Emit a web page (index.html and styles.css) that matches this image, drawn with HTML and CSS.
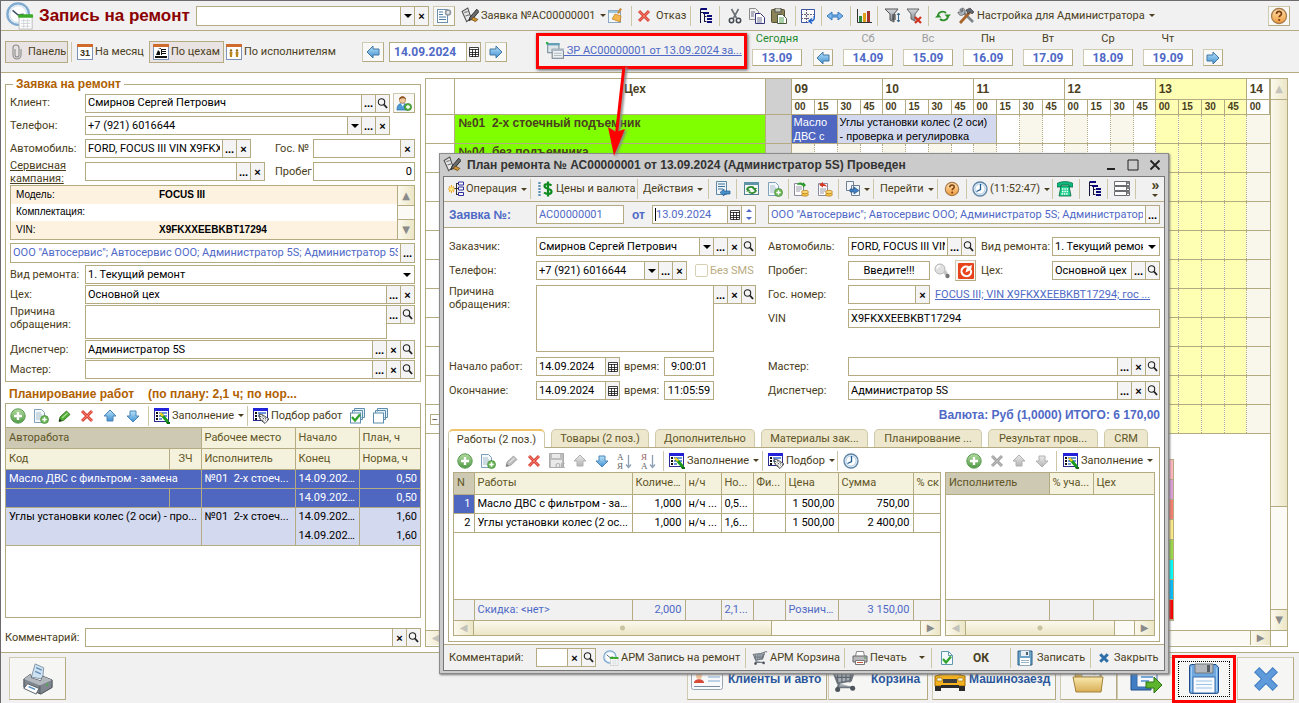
FILE: index.html
```html
<!DOCTYPE html>
<html lang="ru">
<head>
<meta charset="utf-8">
<title>Запись на ремонт</title>
<link rel="stylesheet" href="styles.css">
<script src="app.js" defer></script>
</head>
<body>
<svg class="sprite" aria-hidden="true">
  <defs>
    <linearGradient id="gBlue" x1="0" y1="0" x2="0" y2="1"><stop offset="0" stop-color="#b9e4fa"/><stop offset="1" stop-color="#3f8fd0"/></linearGradient>
    <linearGradient id="gGreen" x1="0" y1="0" x2="0" y2="1"><stop offset="0" stop-color="#b4dba0"/><stop offset="1" stop-color="#4f9a45"/></linearGradient>
    <linearGradient id="gOrange" x1="0" y1="0" x2="0" y2="1"><stop offset="0" stop-color="#ffe2b0"/><stop offset="1" stop-color="#f09a3c"/></linearGradient>
    <linearGradient id="gFolder" x1="0" y1="0" x2="0" y2="1"><stop offset="0" stop-color="#f8e9ae"/><stop offset="1" stop-color="#d9ae55"/></linearGradient>
    <linearGradient id="gGrey" x1="0" y1="0" x2="0" y2="1"><stop offset="0" stop-color="#d5d9de"/><stop offset="1" stop-color="#7f868f"/></linearGradient>
  </defs>
  <symbol id="clockcal" viewBox="0 0 30 30"><circle cx="13" cy="13" r="11.5" fill="#eef6fc" stroke="#7fa9cf" stroke-width="2.5"/><circle cx="13" cy="13" r="9" fill="#fff" stroke="#c9dcec"/><path d="M7 9l6 5 6-1" stroke="#3a4f66" stroke-width="1.6" fill="none"/><rect x="14" y="15" width="14" height="14" fill="#fff" stroke="#b9b9b9"/><rect x="13" y="13" width="16" height="4" rx="1" fill="#3cab2a"/><path d="M16 20h10M16 23h10M16 26h10M19 18v10M23 18v10" stroke="#d0d4d8"/></symbol>
  <symbol id="clip" viewBox="0 0 16 16"><path d="M6 5v6a2 2 0 0 0 4 0V4a3 3 0 0 0-6 0v7a4 4 0 0 0 8 0V5" fill="none" stroke="#8a8a8a" stroke-width="1.1"/></symbol>
  <symbol id="cal31" viewBox="0 0 16 16"><rect x=".5" y=".5" width="15" height="15" fill="#fff" stroke="#7c92b8"/><path d="M0 0h16v3H0z" fill="#cf6b2c"/><text x="8" y="12" font-size="9" font-weight="bold" text-anchor="middle" font-family="Liberation Sans, sans-serif" fill="#3b3216">31</text></symbol>
  <symbol id="calshop" viewBox="0 0 16 16"><rect x=".5" y=".5" width="15" height="15" fill="#fff" stroke="#7c92b8"/><path d="M0 0h16v3H0z" fill="#cf6b2c"/><path d="M2 12h12v2H2zM3 11l2-5 2 2v3zM8 5h5v1H9v1h4v1H9v1h4v1H9v1H8zM5 5l3-1v1z" fill="#111"/></symbol>
  <symbol id="calmen" viewBox="0 0 16 16"><rect x=".5" y=".5" width="15" height="15" fill="#fff" stroke="#7c92b8"/><path d="M0 0h16v3H0z" fill="#cf6b2c"/><circle cx="5" cy="6.500" r="1.200" fill="#8a6410"/><circle cx="11" cy="6.500" r="1.200" fill="#8a6410"/><path d="M3.500 8h3l-.5 5H4zM9.500 8h3l-.5 5h-2z" fill="#b8861b"/></symbol>
  <symbol id="arrl" viewBox="0 0 16 16"><path d="M2 8l6-6v3h6v6H8v3z" fill="url(#gBlue)" stroke="#4378a5"/></symbol>
  <symbol id="arrr" viewBox="0 0 16 16"><path d="M14 8L8 2v3H2v6h6v3z" fill="url(#gBlue)" stroke="#4378a5"/></symbol>
  <symbol id="up" viewBox="0 0 16 16"><path d="M8 2l6 6h-3v5H5V8H2z" fill="url(#gBlue)" stroke="#4b86b8"/></symbol>
  <symbol id="down" viewBox="0 0 16 16"><path d="M8 14L2 8h3V3h6v5h3z" fill="url(#gBlue)" stroke="#4b86b8"/></symbol>
  <symbol id="cal" viewBox="0 0 10 10"><path d="M.5 .500h9v9h-9zM.5 2.500h9M.5 5.500h9M.5 7.500h9M3.500 2v8M6.500 2v8" fill="#fff" stroke="#111" stroke-width=".8"/></symbol>
  <symbol id="listgear" viewBox="0 0 16 16"><rect x="1.500" y="1.500" width="10" height="13" fill="#fff" stroke="#6b8fae"/><path d="M3 4h4M3 6.500h4M3 9h7M3 11.500h7" stroke="#4a7ba5"/><circle cx="12" cy="4.500" r="2.500" fill="#dfe3e6" stroke="#8d979f" stroke-width="1.500"/></symbol>
  <symbol id="sign" viewBox="0 0 16 16"><path d="M1 4l5-3 3 9-4 3z" fill="#e8e8e8" stroke="#555"/><path d="M3 5l3-1M4 8l3-1" stroke="#777"/><path d="M14 2l-6 7-1 3 3-1 6-7z" fill="#6c6c6c" stroke="#222" stroke-width=".8"/><path d="M11 9l4 2-2 2-4-2z" fill="#d2932f" stroke="#5c3b08" stroke-width=".6"/></symbol>
  <symbol id="brush" viewBox="0 0 16 16"><rect x="1.500" y="2.500" width="12" height="12" fill="#f3f8fc" stroke="#8ba7c0"/><path d="M2 3h11v2H2z" fill="#9fc4de"/><path d="M13 0l-3 5 2 1 3-5z" fill="#c98b3d"/><path d="M8 6l6 2-1 6-8-3z" fill="#f4b64c" stroke="#c27d1b" stroke-width=".7"/></symbol>
  <symbol id="redx" viewBox="0 0 16 16"><path d="M3 3l10 10M13 3L3 13" stroke="#d9483b" stroke-width="3"/><path d="M3 3l10 10M13 3L3 13" stroke="#f3786a" stroke-width="1"/></symbol>
  <symbol id="bluex" viewBox="0 0 16 16"><path d="M3 3l10 10M13 3L3 13" stroke="#2f6ea8" stroke-width="4"/></symbol>
  <symbol id="bigx" viewBox="0 0 30 30"><path d="M5 5l20 20M25 5L5 25" stroke="#3c7abf" stroke-width="8"/><path d="M5.500 5.500l19 19M24.500 5.500l-19 19" stroke="#5f9adb" stroke-width="6"/></symbol>
  <symbol id="tree" viewBox="0 0 16 16"><path d="M2 1h6M2.500 1v13.500M2 4.500h4M6.500 4v10M6.500 8.500h2M6.500 13.500h2M2 14.500h1" stroke="#14143c" fill="none"/><path d="M3 0h6v2H3zM5 4h6v2H5zM9 7h5v2H9zM9 10h5v2H9zM9 13h5v2H9z" fill="#0a0a78"/></symbol>
  <symbol id="cut" viewBox="0 0 16 16"><path d="M4.500 1l5 9M11.500 1l-5 9" stroke="#6a6f75" stroke-width="1.600"/><circle cx="4.500" cy="12.500" r="2.200" fill="none" stroke="#444a52" stroke-width="1.500"/><circle cx="11.500" cy="12.500" r="2.200" fill="none" stroke="#444a52" stroke-width="1.500"/></symbol>
  <symbol id="copy" viewBox="0 0 16 16"><path d="M.5.5h6l3 3v8h-9z" fill="#efefef" stroke="#8a8a8a"/><path d="M6.500 5.500h5l4 4v6h-9z" fill="#fff" stroke="#35357c"/><path d="M8 10h5M8 12h5M8 14h5M2 4h4M2 6h3M2 8h3" stroke="#707090"/></symbol>
  <symbol id="paste" viewBox="0 0 16 16"><rect x=".5" y="1.500" width="13" height="13" rx="1" fill="#8c8458" stroke="#544f2e"/><rect x="4" y="0" width="6" height="4" fill="#c9c9b5" stroke="#555"/><path d="M6.500 6.500h5l4 4v5h-9z" fill="#fff" stroke="#4a5a3a"/><path d="M8 10h5M8 12h5M8 14h5" stroke="#55a055"/></symbol>
  <symbol id="tabarr" viewBox="0 0 16 16"><path d="M1.500 1.500h13v8M1.500 1.500v13h7" fill="#fff" stroke="#3a54a8"/><path d="M1 6.500h13M6.500 1v13M1 10.500h9" stroke="#667" stroke-dasharray="2 1"/><path d="M14 8c1 4-1 5-4 5M12 10.500L9 13l3 2.500" fill="none" stroke="#1b5fc9" stroke-width="1.400"/></symbol>
  <symbol id="dbl" viewBox="0 0 16 16"><path d="M0 8l5-4v3h6V4l5 4-5 4V9H5v3z" fill="#79b5ea" stroke="#2b6cb5" stroke-width=".9"/></symbol>
  <symbol id="chart" viewBox="0 0 16 16"><path d="M1.500 1v13.500H16" fill="none" stroke="#333"/><path d="M3 8h3v6H3z" fill="#2b8a3c"/><path d="M7 5h3v9H7z" fill="#e0a01a"/><path d="M11 3h3v11h-3z" fill="#a3322a"/></symbol>
  <symbol id="filt" viewBox="0 0 16 16"><path d="M1 1h13l-4 5v8l-4-2V6z" fill="url(#gGrey)" stroke="#555"/><path d="M8 7h4M8 9h4M8 11h4" stroke="#333"/><path d="M14.500 5v9M13 12l1.500 2 1.500-2M13 7l1.500-2L16 7" stroke="#34688f" fill="none"/></symbol>
  <symbol id="filtx" viewBox="0 0 16 16"><path d="M1 1h12L9 6v7l-4-2V6z" fill="url(#gGrey)" stroke="#666"/><path d="M9 9l6 6M15 9l-6 6" stroke="#d0301f" stroke-width="2.200"/></symbol>
  <symbol id="refresh" viewBox="0 0 16 16"><path d="M3 8c0-5 6-5 8-3M13 8c0 5-6 5-8 3" fill="none" stroke="#2f8f2a" stroke-width="1.800"/><path d="M9.500 6.500H16L12.700 10zM0 9.500h6.500L3.300 6z" fill="#2f8f2a"/></symbol>
  <symbol id="tools" viewBox="0 0 18 18"><path d="M3 2l4 4 9 9" stroke="#7d848c" stroke-width="2.600"/><path d="M1 5c0 3 3 4 5 3L8 6C9 3 7 1 5 1l1 3-2 1z" fill="#aeb5bd" stroke="#555" stroke-width=".7"/><path d="M13 5L3 16" stroke="#a9642c" stroke-width="2.800"/><path d="M9 3l4-2 4 4-2 2-2-2-2 2z" fill="#5f666e" stroke="#333" stroke-width=".6"/></symbol>
  <symbol id="help" viewBox="0 0 18 18"><circle cx="9" cy="9" r="7.500" fill="url(#gOrange)" stroke="#a87d4d" stroke-width="1.300"/><path d="M6.500 7c0-3.500 5-3.300 5-.3 0 1.800-2.300 1.800-2.300 3.600" fill="none" stroke="#7c3f12" stroke-width="1.700"/><circle cx="9.200" cy="13" r="1.100" fill="#7c3f12"/></symbol>
  <symbol id="wins" viewBox="0 0 16 16"><rect x="1.500" y="1.500" width="10" height="8" fill="#dfe6ea" stroke="#7d929e"/><path d="M1 1h11v2H1z" fill="#5fa0b8"/><rect x="5.500" y="6.500" width="10" height="8" fill="#eef1f3" stroke="#7d8a94"/><path d="M5 6h11v2H5z" fill="#a9b8c2"/><path d="M7 10h7M7 12h7" stroke="#b5bdc4"/><path d="M0 0h2v2H0z" fill="#2fae45"/></symbol>
  <symbol id="mag" viewBox="0 0 11 11"><circle cx="4.500" cy="4" r="3.200" fill="none" stroke="#222" stroke-width="1.100"/><path d="M7 6.500L10 10" stroke="#222" stroke-width="1.900"/></symbol>
  <symbol id="useradd" viewBox="0 0 16 16"><path d="M1 15c0-6 3-6.500 5.500-6.500S12 9 12 15z" fill="#4d9bd6" stroke="#2d6ca5" stroke-width=".7"/><path d="M5 8.500l1.700 3 1.600-3z" fill="#fff"/><circle cx="6.500" cy="5" r="3.200" fill="#f0c79c" stroke="#a9743c" stroke-width=".6"/><path d="M3 5c0-5 7-5 7 0C9 2.500 5 3 3 5z" fill="#8a5322"/><circle cx="12" cy="12" r="3.600" fill="#57b03f" stroke="#2d7a1d" stroke-width=".6"/><path d="M12 10v4M10 12h4" stroke="#fff" stroke-width="1.300"/></symbol>
  <symbol id="plus" viewBox="0 0 16 16"><circle cx="8" cy="8" r="7.200" fill="url(#gGreen)" stroke="#5b9a52" stroke-width="1"/><path d="M8 4v8M4 8h8" stroke="#fff" stroke-width="2.400"/></symbol>
  <symbol id="docplus" viewBox="0 0 16 16"><path d="M1.500 1.500h7l3 3v10h-10z" fill="#f5f9fc" stroke="#7fa0b8"/><path d="M3 5h5M3 7h6M3 9h5M3 11h4" stroke="#a5bccb"/><circle cx="11.500" cy="11.500" r="4" fill="#6cb758" stroke="#43873a" stroke-width=".7"/><path d="M11.500 9.300v4.400M9.300 11.500h4.400" stroke="#fff" stroke-width="1.500"/></symbol>
  <symbol id="pencil" viewBox="0 0 16 16"><path d="M3 13.500l1-4.500 6.500-6 3.500 3.500-6.500 6z" fill="#4fae33" stroke="#2c6b1c" stroke-width=".8"/><path d="M3 13.500l.7-2.800 2.200 2.200z" fill="#222"/><path d="M6 10l5.500-5" stroke="#a9dd92" stroke-width="1.300"/></symbol>
  <symbol id="fill" viewBox="0 0 16 16"><rect x=".5" y=".5" width="14" height="13" fill="#fff" stroke="#2b2b8f"/><path d="M0 0h15v3H0z" fill="#2222d8"/><path d="M2 5h2M2 8h2M2 11h2" stroke="#111" stroke-width="2"/><path d="M5 5h8M5 8h8M5 11h3" stroke="#3b6fd0" stroke-width="1.500"/><path d="M7 6l7 8" stroke="#1a9a1a" stroke-width="3"/><path d="M6 5l3 3" stroke="#f2d22a" stroke-width="2.400"/><path d="M12 14h4v2h-3z" fill="#0d6e0d"/></symbol>
  <symbol id="pick" viewBox="0 0 16 16"><rect x=".5" y=".5" width="14" height="12" fill="#fff" stroke="#2b2b8f"/><path d="M0 0h15v3H0z" fill="#2222d8"/><path d="M2 5h2M2 8h2M2 11h2" stroke="#111" stroke-width="2"/><path d="M5 5h8M5 8h3" stroke="#3b6fd0" stroke-width="1.500"/><path d="M6 6l4 1 6 4-4 4.500-5-4z" fill="#fff" stroke="#111" stroke-width=".7"/><path d="M7 8l6 4.500M9 7.500l6 4.500M7.500 10.500l4 3.500" stroke="#111" stroke-dasharray="1 1"/></symbol>
  <symbol id="checks" viewBox="0 0 16 16"><path d="M5.500 3.500v-3h10v9h-3M3.500 5.500v-3h10v9h-3" fill="#e6f0f7" stroke="#5d8dae"/><rect x="1.500" y="5" width="10" height="10" fill="#fff" stroke="#5d8dae"/><path d="M3 9l3 3.500 5-6" fill="none" stroke="#2fa32a" stroke-width="2.400"/></symbol>
  <symbol id="squares" viewBox="0 0 16 16"><path d="M5.500 3.500v-3h10v9h-3M3.500 5.500v-3h10v9h-3" fill="#e6f0f7" stroke="#5d8dae"/><rect x="1.500" y="5" width="10" height="10" fill="#fff" stroke="#5d8dae"/></symbol>
  <symbol id="oper" viewBox="0 0 16 16"><path d="M3.500 4v8M0 8h7M1 5.500l5 5M6 5.500l-5 5" stroke="#eba419" stroke-width="1.100"/><circle cx="3.500" cy="8" r="2" fill="#ffe57a"/><path d="M8.500 2v12M8 2.500h2M6.500 7.500H10M8 13.500h2" stroke="#333" fill="none"/><path d="M10.500 1h5v3h-5zM10.500 6h5v3h-5zM10.500 11.500h5v3h-5z" fill="#fff" stroke="#2c2c9c"/></symbol>
  <symbol id="dollar" viewBox="0 0 16 16"><path d="M1 1v14M1 2h3M1 5h3M1 8h3M1 11h3M1 14h3" stroke="#2b6ea0" stroke-dasharray="2 1"/><path d="M13.500 4.500c-2-2-7-2-7 .5 0 3.500 7 2 7 5.500 0 3-5 3-7.500 1M10 .5v15" fill="none" stroke="#0d8a1d" stroke-width="2.200"/></symbol>
  <symbol id="listin" viewBox="0 0 16 16"><path d="M1.500.5h10v13h-10z" fill="#eef5fa" stroke="#5e87a5"/><path d="M3 3h7M3 5.500h7M3 8h5" stroke="#3f6f94"/><path d="M5 11.500l4-3.500v2h6v3H9v2z" fill="#4990cc" stroke="#205a8d" stroke-width=".7"/></symbol>
  <symbol id="cyc" viewBox="0 0 16 16"><rect x=".5" y="1.500" width="14" height="12" fill="#f3f8f3" stroke="#4f7f94"/><path d="M0 1h15v3H0z" fill="#5f93a8"/><path d="M3 9c0-3 5-4 7-2M12 9c0 3-5 4-7 2" fill="none" stroke="#2c8a2c" stroke-width="1.600"/><path d="M8 7h5l-2 3zM2 10.500h5L4.500 8z" fill="#2c8a2c"/></symbol>
  <symbol id="docg" viewBox="0 0 16 16"><path d="M1.500 2.500h9v12h-9z" fill="#fff" stroke="#8a8a9c"/><path d="M3 6h6M3 8h6M3 10h4" stroke="#99a"/><path d="M4 4c1-3 4-3 6-1V1l3 3-3 3V5C8 3.500 6 3.500 4 4z" fill="#2d9a2d"/><ellipse cx="12" cy="13.500" rx="3.500" ry="1.700" fill="#f6c044" stroke="#b07c17" stroke-width=".7"/><ellipse cx="12" cy="11" rx="3.500" ry="1.700" fill="#fbd673" stroke="#b07c17" stroke-width=".7"/></symbol>
  <symbol id="docr" viewBox="0 0 16 16"><path d="M1.500 2.500h9v12h-9z" fill="#fff" stroke="#8a8a9c"/><path d="M3 8h6M3 10h6M3 12h4" stroke="#99a"/><path d="M10 6C9 3 7 3 6 3V1L2 3.700 6 6.500V5c2 0 3 0 4 1z" fill="#d8361f"/><ellipse cx="12" cy="13.500" rx="3.500" ry="1.700" fill="#f6c044" stroke="#b07c17" stroke-width=".7"/><ellipse cx="12" cy="11" rx="3.500" ry="1.700" fill="#fbd673" stroke="#b07c17" stroke-width=".7"/></symbol>
  <symbol id="docgo" viewBox="0 0 16 16"><path d="M.5.5h7v9h-7zM5.500 4.500h8v10h-8z" fill="#f2f6fa" stroke="#6d7f92"/><path d="M4 8l4 0V6l5 3.500L8 13v-2H4z" fill="#3d7fbf" stroke="#1e4f80" stroke-width=".6"/></symbol>
  <symbol id="clock" viewBox="0 0 16 16"><circle cx="8" cy="8" r="7" fill="#dfeefa" stroke="#5f83a5" stroke-width="1.300"/><circle cx="8" cy="8" r="5" fill="#fff" stroke="#9dbcd6" stroke-width=".7"/><path d="M8.500 3v5.500l-4 2" stroke="#1f5d95" stroke-width="1.300" fill="none"/></symbol>
  <symbol id="phone" viewBox="0 0 16 16"><path d="M0 2.500C4 0 12 0 16 2.500V6h-4V4H4v2H0z" fill="#10b981" stroke="#056b3e" stroke-width=".8"/><path d="M4 5h8l2 10H2z" fill="#1fd18f" stroke="#056b3e" stroke-width=".8"/><path d="M5 8h6M5 10.500h6M4.500 13h7" stroke="#fff" stroke-width="1.300" stroke-dasharray="1.500 .8"/></symbol>
  <symbol id="lists" viewBox="0 0 16 16"><path d="M.5.500h15v4H.5zM.5 5.500h15v4H.5zM.5 10.500h15v4H.5z" fill="#fff" stroke="#6a6e73"/><path d="M12.500 0v15" stroke="#6a6e73"/><path d="M13 2h2M13 7h2M13 12h2" stroke="#111"/></symbol>
  <symbol id="floppy" viewBox="0 0 16 16"><path d="M1 1h14v14H1z" fill="#6da3c7" stroke="#2e5f85"/><path d="M4 1h8v5H4z" fill="#e9eef2"/><path d="M9 2h2v3H9z" fill="#47606f"/><path d="M3 8h10v7H3z" fill="#fff"/><path d="M4 10.500h8M4 12.500h8" stroke="#9db5c5"/></symbol>
  <symbol id="bigfloppy" viewBox="0 0 32 32"><path d="M1.500 3.500q0-2 2-2H28l2.500 3v24q0 2-2 2h-25q-2 0-2-2z" fill="#6ea8e0" stroke="#1f4b8a"/><path d="M3.500 4v24M28.500 5v23" stroke="#a5ccf2"/><path d="M7 1h18v9H7z" fill="#b4b8bc" stroke="#70777f"/><path d="M19 2h3v7h-3z" fill="#555c64"/><path d="M5 14h22v16H5z" fill="#f7fbff" stroke="#3c6ea8"/><path d="M8 18h16M8 21.500h16M8 25h16" stroke="#9fc3e6"/></symbol>
  <symbol id="diskok" viewBox="0 0 16 16"><path d="M.5.5h14v14H.5z" fill="#8d959d" stroke="#6d757d"/><path d="M3 1h8v4H3zM2 7h11v7H2z" fill="#d8dce0"/><text x="16" y="15" font-size="7" font-weight="bold" text-anchor="end" font-family="Liberation Sans, sans-serif" fill="#6d757d">ОК</text></symbol>
  <symbol id="az" viewBox="0 0 16 16"><text x="0" y="7" font-size="9" font-family="Liberation Serif, serif" fill="#666">А</text><text x="0" y="15.500" font-size="9" font-family="Liberation Serif, serif" fill="#666">Я</text><path d="M11.500 2v12M9 11.500l2.500 3 2.500-3" fill="none" stroke="#8da0b3" stroke-width="1.300"/></symbol>
  <symbol id="za" viewBox="0 0 16 16"><text x="0" y="7" font-size="9" font-family="Liberation Serif, serif" fill="#966">Я</text><text x="0" y="15.500" font-size="9" font-family="Liberation Serif, serif" fill="#666">А</text><path d="M11.500 2v12M9 11.500l2.500 3 2.500-3" fill="none" stroke="#8da0b3" stroke-width="1.300"/></symbol>
  <symbol id="bulb" viewBox="0 0 16 16"><circle cx="6" cy="6" r="5" fill="#e0e0e0" stroke="#b5b5b5"/><path d="M9 10l3-3 2 4-2 2z" fill="#c5c5c5"/><circle cx="13.500" cy="13" r="2.200" fill="#777"/><path d="M3 6c0-2 1-3 3-3" fill="none" stroke="#fff" stroke-width="1.300"/></symbol>
  <symbol id="swirl" viewBox="0 0 16 16"><rect width="16" height="16" rx="1" fill="#e8441c"/><path d="M10.500 4C6 2.500 3 5.500 3.500 9c1 4.500 7 5.500 9 2 .8-1.500.8-3 .300-4" fill="none" stroke="#fff" stroke-width="2"/><path d="M7.500 9.500L9 4l5-2-1 5z" fill="#fff"/></symbol>
  <symbol id="cart" viewBox="0 0 18 16"><path d="M1 4l9-1 5-2h2M14 2l-3 8M1.500 4l2.500 6.500L12 9l2-6M5 10.500L4 13h9" fill="#a9b0b8" stroke="#6d747c" stroke-width="1.100"/><path d="M4 4v6M6.500 4v6M9 3.500V9.500M11.500 3v6M2.500 7H12" stroke="#5d656e" stroke-width=".7"/><circle cx="4" cy="14.300" r="1.500" fill="#4d545c"/><circle cx="13" cy="13.500" r="1.500" fill="#4d545c"/></symbol>
  <symbol id="print" viewBox="0 0 16 16"><path d="M4.500 1.500h7l1 5h-9z" fill="#fff" stroke="#888"/><path d="M1 6h14v6H1z" fill="#b9b9bb" stroke="#66666a"/><path d="M3.500 10.500h9v4h-9z" fill="#fff" stroke="#777"/><path d="M5 12.500h6" stroke="#c2573a"/><circle cx="13" cy="8" r=".8" fill="#2f9a2f"/></symbol>
  <symbol id="bigprint" viewBox="0 0 34 34"><path d="M10 15L14 1l9 4-1 12z" fill="#cfe2f2" stroke="#7e94a8"/><path d="M15 5l6 2.500M14 9l6 2.500" stroke="#5e8fb8" stroke-width="1.500"/><path d="M2 17l7-5 1 4 10 3 2-5 10 4v8l-12 7L2 26z" fill="#7f868e" stroke="#3f454c"/><path d="M2 17l17 7 13-6-10-4-2 5-10-3-1-4z" fill="#b2b8be"/><path d="M6 22l12 5-3 6-13-6z" fill="#fff" stroke="#59616a"/><path d="M7 25l7 3" stroke="#4f8fc4" stroke-width="1.500"/><path d="M19 24v9" stroke="#4c5259"/><circle cx="27" cy="23" r="1.200" fill="#45b545"/></symbol>
  <symbol id="doccheck" viewBox="0 0 16 16"><path d="M2.500 1.500h7l4 4v9h-11z" fill="#f4fafc" stroke="#5f98ae"/><path d="M9.500 1.500v4h4" fill="none" stroke="#5f98ae"/><path d="M4 9l3 3.500 5-6" stroke="#2fa32a" stroke-width="2.200" fill="none"/></symbol>
  <symbol id="card" viewBox="0 0 34 28"><rect x="1.500" y="1.500" width="31" height="23" rx="2" fill="#f7f9fb" stroke="#9ba6b3"/><circle cx="9" cy="11" r="3" fill="#efc39a"/><path d="M4 18c0-5 10-5 10 0z" fill="#d84a35"/><path d="M18 8h12M18 12h12M18 16h12" stroke="#a9c4de" stroke-width="1.500"/><path d="M4 21.500h26" stroke="#7b8c9e"/></symbol>
  <symbol id="car" viewBox="0 0 34 26"><path d="M6 9l4-7h14l4 7z" fill="#555d66" stroke="#8b5a06"/><path d="M2 10q15-4 30 0v10H2z" fill="#f5b21e" stroke="#a06b04"/><path d="M10 13h14v4H10z" fill="#3d3d3d"/><path d="M4 12h5v3H4zM25 12h5v3h-5z" fill="#fff8d8" stroke="#8b6a12" stroke-width=".6"/><path d="M2 20h6v5H2zM26 20h6v5h-6zM8 19h18v3H8z" fill="#2a2a2a"/></symbol>
  <symbol id="folder" viewBox="0 0 34 30"><path d="M3 6h10l3 3h13v18H4z" fill="#d4ac57" stroke="#96752e"/><path d="M10 8l8-5 10 4v6H10z" fill="#fff" stroke="#9aa"/><path d="M16 7l8-3-1 7z" fill="#3ea32d"/><path d="M1 13h30l-2 15H4z" fill="url(#gFolder)" stroke="#a5833c"/></symbol>
  <symbol id="export" viewBox="0 0 34 30"><path d="M2 2h20v24H2z" fill="#3f7dc4" stroke="#234f8a"/><path d="M8 4h20v19H8z" fill="#f5f9fd" stroke="#3c6ea8"/><path d="M12 9h12M12 13h12M12 17h8" stroke="#4f8fd0" stroke-width="1.500"/><path d="M17 18h8v-5l8 8-8 8v-5h-8z" fill="#5db52f" stroke="#2f7412"/></symbol>
</svg>

<header>
  <div class="mainbar">
    <svg class="i30"><use href="#clockcal"/></svg>
    <h1>Запись на ремонт</h1>
    <span class="field tall search"><input aria-label="Поиск"><button class="drop" aria-label="Выбрать"></button><button>×</button></span>
    <button class="framed" aria-label="Настройка списка"><svg><use href="#listgear"/></svg></button>
    <button class="tool"><svg class="i18"><use href="#sign"/></svg>Заявка №АС00000001<i class="caret"></i></button>
    <button class="tool" aria-label="Очистить"><svg><use href="#brush"/></svg></button>
    <i class="sep"></i>
    <button class="tool gapped"><svg><use href="#redx"/></svg>Отказ</button>
    <i class="sep"></i>
    <button class="tool" aria-label="Структура"><svg><use href="#tree"/></svg></button>
    <i class="sep"></i>
    <button class="tool" aria-label="Вырезать"><svg><use href="#cut"/></svg></button>
    <button class="tool" aria-label="Копировать"><svg><use href="#copy"/></svg></button>
    <button class="tool" aria-label="Вставить"><svg><use href="#paste"/></svg></button>
    <i class="sep"></i>
    <button class="tool" aria-label="Обновить таблицу"><svg><use href="#tabarr"/></svg></button>
    <i class="sep"></i>
    <button class="tool" aria-label="Ширина"><svg><use href="#dbl"/></svg></button>
    <i class="sep"></i>
    <button class="tool" aria-label="Диаграмма"><svg><use href="#chart"/></svg></button>
    <i class="sep"></i>
    <button class="tool" aria-label="Отбор"><svg><use href="#filt"/></svg></button>
    <button class="tool" aria-label="Снять отбор"><svg><use href="#filtx"/></svg></button>
    <i class="sep"></i>
    <button class="tool" aria-label="Обновить"><svg><use href="#refresh"/></svg></button>
    <button class="tool"><svg class="i18"><use href="#tools"/></svg>Настройка для Администратора<i class="caret"></i></button>
    <button class="framed" aria-label="Справка"><svg class="i18"><use href="#help"/></svg></button>
  </div>

  <div class="datebar">
    <button class="mode on"><svg><use href="#clip"/></svg>Панель</button>
    <i class="sep"></i>
    <button class="mode"><svg><use href="#cal31"/></svg>На месяц</button>
    <button class="mode on"><svg><use href="#calshop"/></svg>По цехам</button>
    <button class="mode"><svg><use href="#calmen"/></svg>По исполнителям</button>
    <button class="framed" aria-label="Предыдущий день"><svg><use href="#arrl"/></svg></button>
    <span class="field tall datefield"><input aria-label="Дата" value="14.09.2024"><button aria-label="Календарь"><svg class="i10"><use href="#cal"/></svg></button></span>
    <button class="framed" aria-label="Следующий день"><svg><use href="#arrr"/></svg></button>
    <div class="callout"><a href="#plan"><svg class="i18"><use href="#wins"/></svg><span>&nbsp;ЗР АС00000001 от 13.09.2024 за...</span></a></div>
    <div class="day today"><span>Сегодня</span><button>13.09</button></div>
    <button class="framed small" aria-label="Назад"><svg><use href="#arrl"/></svg></button>
    <div class="day off"><span>Сб</span><button>14.09</button></div>
    <div class="day off"><span>Вс</span><button>15.09</button></div>
    <div class="day"><span>Пн</span><button>16.09</button></div>
    <div class="day"><span>Вт</span><button>17.09</button></div>
    <div class="day"><span>Ср</span><button>18.09</button></div>
    <div class="day"><span>Чт</span><button>19.09</button></div>
    <button class="framed small" aria-label="Вперёд"><svg><use href="#arrr"/></svg></button>
  </div>
</header>

<main>
  <section class="side">
    <fieldset>
      <legend>Заявка на ремонт</legend>
      <div class="row client"><label for="cl">Клиент:</label><span class="field"><input id="cl" value="Смирнов Сергей Петрович"><button>...</button><button aria-label="Открыть"><svg class="i11"><use href="#mag"/></svg></button></span><button class="framed" aria-label="Добавить клиента"><svg><use href="#useradd"/></svg></button></div>
      <div class="row client"><label for="ph">Телефон:</label><span class="field"><input id="ph" value="+7 (921) 6016644"><button class="drop" aria-label="Выбрать"></button><button>...</button><button>×</button></span></div>
      <div class="row auto"><label for="au">Автомобиль:</label><span class="field"><input id="au" value="FORD, FOCUS III VIN X9FKXXEEBKBT17294"><button>...</button><button>×</button></span><label for="gn">Гос. №</label><span class="field"><input id="gn"><button>×</button></span></div>
      <div class="row auto service"><a href="#service">Сервисная кампания:</a><span class="field"><input aria-label="Сервисная кампания"><button>...</button><button>×</button></span><label for="pr">Пробег</label><span class="field"><input id="pr" class="num" value="0"></span></div>
      <div class="info">
        <table>
          <tr><th>Модель:</th><td>FOCUS III</td></tr>
          <tr><th>Комплектация:</th><td></td></tr>
          <tr><th>VIN:</th><td>X9FKXXEEBKBT17294</td></tr>
        </table>
        <div class="vscroll"><button aria-label="Вверх">▲</button><span></span><button aria-label="Вниз">▼</button></div>
      </div>
      <span class="field tall org"><input aria-label="Организация" value="ООО &quot;Автосервис&quot;; Автосервис ООО; Администратор 5S; Администратор 5S"><button>...</button></span>
      <div class="row tight"><label for="vr">Вид ремонта:</label><span class="field"><select id="vr"><option>1. Текущий ремонт</option></select></span></div>
      <div class="row tight"><label for="ce">Цех:</label><span class="field"><input id="ce" value="Основной цех"><button>...</button><button>×</button></span></div>
      <div class="row tight memo"><label for="pc">Причина обращения:</label><div class="memobox"><textarea id="pc"></textarea><span class="field btns"><button>...</button><button aria-label="Открыть"><svg class="i11"><use href="#mag"/></svg></button></span></div></div>
      <div class="row tight"><label for="di">Диспетчер:</label><span class="field"><input id="di" value="Администратор 5S"><button>...</button><button>×</button><button aria-label="Открыть"><svg class="i11"><use href="#mag"/></svg></button></span></div>
      <div class="row tight"><label for="ma">Мастер:</label><span class="field"><input id="ma"><button>...</button><button>×</button><button aria-label="Открыть"><svg class="i11"><use href="#mag"/></svg></button></span></div>
    </fieldset>

    <h2><span>Планирование работ</span><span>(по плану: 2,1 ч; по нор...</span></h2>
    <div class="plan">
      <div class="planbar">
        <button class="tool" aria-label="Добавить"><svg><use href="#plus"/></svg></button>
        <button class="tool" aria-label="Скопировать"><svg><use href="#docplus"/></svg></button>
        <button class="tool" aria-label="Изменить"><svg><use href="#pencil"/></svg></button>
        <button class="tool" aria-label="Удалить"><svg><use href="#redx"/></svg></button>
        <button class="tool" aria-label="Выше"><svg><use href="#up"/></svg></button>
        <button class="tool" aria-label="Ниже"><svg><use href="#down"/></svg></button>
        <i class="sep"></i>
        <button class="tool"><svg><use href="#fill"/></svg>Заполнение<i class="caret"></i></button>
        <i class="sep"></i>
        <button class="tool"><svg><use href="#pick"/></svg>Подбор работ</button>
        <button class="tool" aria-label="Отметить все"><svg><use href="#checks"/></svg></button>
        <button class="tool" aria-label="Снять все"><svg><use href="#squares"/></svg></button>
      </div>
      <table class="data plantable">
        <colgroup><col class="c-code"><col class="c-part"><col class="c-place"><col class="c-time"><col class="c-hours"></colgroup>
        <thead>
          <tr><th colspan="2" class="cur">Авторабота</th><th>Рабочее место</th><th>Начало</th><th>План, ч</th></tr>
          <tr><th>Код</th><th>ЗЧ</th><th>Исполнитель</th><th>Конец</th><th>Норма, ч</th></tr>
        </thead>
        <tbody>
          <tr class="sel"><td colspan="2">Масло ДВС с фильтром - замена</td><td>№01&nbsp; 2-х стоеч...</td><td>14.09.202...</td><td class="num">0,50</td></tr>
          <tr class="sel"><td></td><td></td><td></td><td>14.09.202...</td><td class="num">0,50</td></tr>
          <tr class="alt"><td colspan="2">Углы установки колес (2 оси) - про...</td><td>№01&nbsp; 2-х стоеч...</td><td>14.09.202...</td><td class="num">1,60</td></tr>
          <tr class="alt last"><td colspan="2"></td><td></td><td>14.09.202...</td><td class="num">1,60</td></tr>
        </tbody>
      </table>
    </div>
    <div class="row comment"><label for="co">Комментарий:</label><span class="field"><input id="co"><button>×</button><button aria-label="Открыть"><svg class="i11"><use href="#mag"/></svg></button></span></div>
  </section>

  <section class="board">
    <div class="canvas">
      <table class="sched">
        <colgroup id="schedCols"><col class="s-mark"><col class="s-shop"><col class="s-gap"></colgroup>
        <thead>
          <tr id="hours"><th rowspan="2"></th><th rowspan="2" class="shop">Цех</th><th rowspan="2" class="gap"></th></tr>
          <tr id="quarters"></tr>
        </thead>
        <tbody id="slots"></tbody>
      </table>
      <div class="legend"><i class="l1"></i><i class="l2"></i><i class="l3"></i><i class="l4"></i><i class="l5"></i><i class="l6"></i><i class="l7"></i><i class="l8"></i></div>
    </div>
    <div class="vscroll tallscroll"><button aria-label="Вверх" class="dim">▲</button><b></b><span></span><button aria-label="Вниз">▼</button></div>
    <div class="hscroll"><button aria-label="Влево" class="dim">◀</button><b></b><span></span><button aria-label="Вправо">▶</button></div>
    <i class="corner"></i>
    <button class="collapse" aria-label="Свернуть">−</button>
  </section>
</main>

<footer>
  <button class="big" aria-label="Печать"><svg class="i34"><use href="#bigprint"/></svg></button>
  <button class="big word clients"><svg class="i34"><use href="#card"/></svg>Клиенты и авто</button>
  <button class="big word basket"><svg class="i30"><use href="#cart"/></svg>Корзина</button>
  <button class="big word checkin"><svg class="i34"><use href="#car"/></svg>Машинозаезд</button>
  <button class="big" aria-label="Открыть"><svg class="i34"><use href="#folder"/></svg></button>
  <button class="big" aria-label="Выгрузить"><svg class="i34"><use href="#export"/></svg></button>
  <button class="big save" aria-label="Сохранить"><svg class="i34"><use href="#bigfloppy"/></svg></button>
  <button class="big" aria-label="Закрыть"><svg class="i30"><use href="#bigx"/></svg></button>
</footer>

<section class="window" id="plan" role="dialog" aria-labelledby="wt">
  <div class="titlebar"><svg class="i18"><use href="#sign"/></svg><h3 id="wt">План ремонта № АС00000001 от 13.09.2024 (Администратор 5S) Проведен</h3>
    <button aria-label="Свернуть"><svg class="i12" viewBox="0 0 12 12"><path d="M2 10h8" stroke="#222" stroke-width="2"/></svg></button>
    <button aria-label="Развернуть"><svg class="i12" viewBox="0 0 12 12"><path d="M1 1h10v10H1z" fill="none" stroke="#222"/></svg></button>
    <button aria-label="Закрыть окно"><svg class="i12" viewBox="0 0 12 12"><path d="M1.500 1.500l9 9M10.500 1.500l-9 9" stroke="#222" stroke-width="1.800"/></svg></button>
  </div>
  <div class="winbody">
    <div class="winbar">
      <button class="tool"><svg><use href="#oper"/></svg>Операция<i class="caret"></i></button>
      <i class="sep"></i>
      <button class="tool"><svg><use href="#dollar"/></svg>Цены и валюта</button>
      <i class="sep"></i>
      <button class="tool">Действия<i class="caret"></i></button>
      <i class="sep"></i>
      <button class="tool" aria-label="Список"><svg><use href="#listin"/></svg></button>
      <i class="sep"></i>
      <button class="tool" aria-label="Перечитать"><svg><use href="#cyc"/></svg></button>
      <button class="tool" aria-label="Скопировать"><svg><use href="#docplus"/></svg></button>
      <i class="sep"></i>
      <button class="tool" aria-label="Провести"><svg><use href="#docg"/></svg></button>
      <button class="tool" aria-label="Отменить проведение"><svg><use href="#docr"/></svg></button>
      <i class="sep"></i>
      <button class="tool" aria-label="Ввести на основании"><svg><use href="#docgo"/></svg><i class="caret near"></i></button>
      <i class="sep"></i>
      <button class="tool">Перейти<i class="caret"></i></button>
      <i class="sep"></i>
      <button class="tool" aria-label="Справка"><svg><use href="#help"/></svg></button>
      <i class="sep"></i>
      <button class="tool"><svg><use href="#clock"/></svg>(11:52:47)<i class="caret"></i></button>
      <i class="sep"></i>
      <button class="tool" aria-label="Позвонить"><svg><use href="#phone"/></svg></button>
      <i class="sep"></i>
      <button class="tool" aria-label="Структура"><svg><use href="#tree"/></svg></button>
      <i class="sep"></i>
      <button class="tool" aria-label="Списки"><svg><use href="#lists"/></svg></button>
      <i class="sep"></i>
      <button class="more" aria-label="Ещё">»<i class="caret"></i></button>
    </div>
    <div class="winnum">
      <label for="num">Заявка №:</label><span class="field w88"><input id="num" value="АС00000001"></span>
      <label for="dt">от</label><span class="field w104 caretfield"><input id="dt" value="13.09.2024"><button aria-label="Календарь"><svg class="i10"><use href="#cal"/></svg></button><button class="spin" aria-label="Изменить дату"><i class="su"></i><i class="sd"></i></button></span>
      <span class="field"><input aria-label="Организация" value="ООО &quot;Автосервис&quot;; Автосервис ООО; Администратор 5S; Администратор 5S"><button>...</button></span>
    </div>
    <div class="form">
      <div class="col">
        <div class="line"><label for="za1">Заказчик:</label><span class="field w220"><input id="za1" value="Смирнов Сергей Петрович"><button class="drop" aria-label="Выбрать"></button><button>...</button><button>×</button><button aria-label="Открыть"><svg class="i11"><use href="#mag"/></svg></button></span></div>
        <div class="line"><label for="te1">Телефон:</label><span class="field w151"><input id="te1" value="+7 (921) 6016644"><button class="drop" aria-label="Выбрать"></button><button>...</button><button>×</button></span><label class="sms"><input type="checkbox">Без SMS</label></div>
        <div class="line memoline"><label for="pr1">Причина обращения:</label><div class="memobox"><textarea id="pr1"></textarea><span class="field btns"><button>...</button><button>×</button><button aria-label="Открыть"><svg class="i11"><use href="#mag"/></svg></button></span></div></div>
        <div class="line"><label for="n1">Начало работ:</label><span class="field w84"><input id="n1" value="14.09.2024"><button aria-label="Календарь"><svg class="i10"><use href="#cal"/></svg></button></span><label class="t" for="nt">время:</label><span class="field w50"><input id="nt" class="mid" value="9:00:01"></span></div>
        <div class="line"><label for="o1">Окончание:</label><span class="field w84"><input id="o1" value="14.09.2024"><button aria-label="Календарь"><svg class="i10"><use href="#cal"/></svg></button></span><label class="t" for="ot">время:</label><span class="field w50"><input id="ot" class="mid" value="11:05:59"></span></div>
      </div>
      <div class="col right">
        <div class="line"><label for="a2">Автомобиль:</label><span class="field w128"><input id="a2" value="FORD, FOCUS III VIN"><button>...</button><button aria-label="Открыть"><svg class="i11"><use href="#mag"/></svg></button></span><label class="third" for="v2">Вид ремонта:</label><span class="field grow"><select id="v2"><option>1. Текущий ремонт</option></select></span></div>
        <div class="line"><label for="p2">Пробег:</label><span class="field w82"><input id="p2" class="mid" value="Введите!!!"></span><svg class="bulb"><use href="#bulb"/></svg><button class="framed swirl" aria-label="Пробег"><svg><use href="#swirl"/></svg></button><label class="third" for="c2">Цех:</label><span class="field grow"><input id="c2" value="Основной цех"><button>...</button><button aria-label="Открыть"><svg class="i11"><use href="#mag"/></svg></button></span></div>
        <div class="line"><label for="g2">Гос. номер:</label><span class="field w82"><input id="g2"><button>×</button></span><a class="carlink" href="#car-card">FOCUS III; VIN X9FKXXEEBKBT17294; гос ...</a></div>
        <div class="line vin"><label for="vin2">VIN</label><span class="field grow"><input id="vin2" value="X9FKXXEEBKBT17294"></span></div>
        <div class="line"><label for="m2">Мастер:</label><span class="field grow"><input id="m2"><button>...</button><button>×</button><button aria-label="Открыть"><svg class="i11"><use href="#mag"/></svg></button></span></div>
        <div class="line"><label for="d2">Диспетчер:</label><span class="field grow"><input id="d2" value="Администратор 5S"><button>...</button><button>×</button><button aria-label="Открыть"><svg class="i11"><use href="#mag"/></svg></button></span></div>
      </div>
    </div>
    <p class="total">Валюта: Руб (1,0000) ИТОГО: 6 170,00</p>
    <div class="tabs" role="tablist">
      <button role="tab" class="on" aria-selected="true">Работы (2 поз.)</button><button role="tab">Товары (2 поз.)</button><button role="tab">Дополнительно</button><button role="tab">Материалы зак...</button><button role="tab">Планирование ...</button><button role="tab">Результат пров...</button><button role="tab">CRM</button>
    </div>
    <div class="pane">
      <div class="works">
        <div class="worksbar">
          <button class="tool" aria-label="Добавить"><svg><use href="#plus"/></svg></button>
          <button class="tool" aria-label="Скопировать"><svg><use href="#docplus"/></svg></button>
          <button class="tool grey" aria-label="Изменить"><svg><use href="#pencil"/></svg></button>
          <button class="tool" aria-label="Удалить"><svg><use href="#redx"/></svg></button>
          <button class="tool grey" aria-label="Закончить"><svg><use href="#diskok"/></svg></button>
          <button class="tool grey" aria-label="Выше"><svg><use href="#up"/></svg></button>
          <button class="tool" aria-label="Ниже"><svg><use href="#down"/></svg></button>
          <button class="tool" aria-label="По возрастанию"><svg><use href="#az"/></svg></button>
          <button class="tool" aria-label="По убыванию"><svg><use href="#za"/></svg></button>
          <i class="sep"></i>
          <button class="tool"><svg><use href="#fill"/></svg>Заполнение<i class="caret"></i></button>
          <i class="sep"></i>
          <button class="tool"><svg><use href="#pick"/></svg>Подбор<i class="caret"></i></button>
          <i class="sep"></i>
          <button class="tool" aria-label="Время"><svg><use href="#clock"/></svg></button>
        </div>
        <div class="box">
          <table class="data">
            <colgroup><col class="w20"><col class="w158"><col class="w53"><col class="w36"><col class="w32"><col class="w32"><col class="w53"><col class="w75"><col></colgroup>
            <thead><tr><th class="cur">N</th><th>Работы</th><th>Количе...</th><th>н/ч</th><th>Но...</th><th>Фи...</th><th>Цена</th><th>Сумма</th><th class="cut">% ск</th></tr></thead>
            <tbody>
              <tr><td class="num mark">1</td><td>Масло ДВС с фильтром - за...</td><td class="num">1,000</td><td>н/ч ...</td><td>0,5...</td><td></td><td class="num">1 500,00</td><td class="num">750,00</td><td></td></tr>
              <tr><td class="num">2</td><td>Углы установки колес (2 ос...</td><td class="num">1,000</td><td>н/ч ...</td><td>1,6...</td><td></td><td class="num">1 500,00</td><td class="num">2 400,00</td><td></td></tr>
              <tr class="blank"><td colspan="9"></td></tr>
            </tbody>
            <tfoot><tr><td></td><td>Скидка: &lt;нет&gt;</td><td class="num">2,000</td><td></td><td>2,1...</td><td></td><td>Рознич...</td><td class="num">3 150,00</td><td></td></tr></tfoot>
          </table>
          <div class="hscroll"><button aria-label="Влево" class="dim">◀</button><b></b><span></span><button aria-label="Вправо">▶</button></div>
        </div>
      </div>
      <div class="people">
        <div class="peoplebar">
          <button class="tool" aria-label="Добавить"><svg><use href="#plus"/></svg></button>
          <button class="tool grey" aria-label="Удалить"><svg><use href="#redx"/></svg></button>
          <button class="tool grey" aria-label="Выше"><svg><use href="#up"/></svg></button>
          <button class="tool grey" aria-label="Ниже"><svg><use href="#down"/></svg></button>
          <i class="sep"></i>
          <button class="tool"><svg><use href="#fill"/></svg>Заполнение<i class="caret"></i></button>
        </div>
        <div class="box">
          <table class="data">
            <colgroup><col class="w103"><col class="w44"><col></colgroup>
            <thead><tr><th class="cur">Исполнитель</th><th>% уча...</th><th>Цех</th></tr></thead>
            <tbody><tr class="blank tallblank"><td colspan="3"></td></tr></tbody>
            <tfoot><tr><td></td><td></td><td></td></tr></tfoot>
          </table>
          <div class="hscroll wide"><button aria-label="Влево" class="dim">◀</button><b></b><span></span><button aria-label="Вправо">▶</button></div>
        </div>
      </div>
    </div>
    <div class="winfoot">
      <label for="k2">Комментарий:</label><span class="field w60"><input id="k2"><button>×</button><button aria-label="Открыть"><svg class="i11"><use href="#mag"/></svg></button></span>
      <button class="tool"><svg><use href="#clockcal"/></svg>АРМ Запись на ремонт</button>
      <i class="sep"></i>
      <button class="tool"><svg><use href="#cart"/></svg>АРМ Корзина</button>
      <i class="sep"></i>
      <button class="tool spread"><svg><use href="#print"/></svg>Печать<i class="caret"></i></button>
      <i class="sep"></i>
      <button class="tool ok"><svg><use href="#doccheck"/></svg><b>ОК</b></button>
      <i class="sep"></i>
      <button class="tool gapped"><svg><use href="#floppy"/></svg>Записать</button>
      <i class="sep"></i>
      <button class="tool gapped"><svg class="i12"><use href="#bluex"/></svg>Закрыть</button>
    </div>
  </div>
</section>

<svg class="pointer" viewBox="0 0 30 92" aria-hidden="true"><path d="M18 0L10.500 68" stroke="#f00" stroke-width="3"/><path d="M2 61l8 5 9-3L8 90z" fill="#f00"/></svg>
</body>
</html>
```

FILE: styles.css
```css
:root {
  --line: #b5ab82;
  --bar: #f1f1f1;
  --ink: #4a4021;
  --blue: #4f69c6;
}
* { box-sizing: border-box; }
body {
  position: relative;
  display: flex;
  flex-direction: column;
  min-height: 100vh;
  margin: 0;
  border-top: 1px solid #6e6b6e;
  border-left: 1px solid #6e6b6e;
  background: var(--bar);
  color: var(--ink);
  font: 11px/14px Roboto, "Liberation Sans", sans-serif;
  overflow: hidden;
}
.sprite { position: absolute; width: 0; height: 0; }
svg { width: 16px; height: 16px; flex: none; }
.i10 { width: 10px; height: 10px; }
.i11 { width: 11px; height: 11px; }
.i12 { width: 12px; height: 12px; }
.i18 { width: 18px; height: 18px; }
.i30 { width: 30px; height: 28px; }
.i34 { width: 34px; height: 32px; }
h1, h2, h3, p { margin: 0; font-size: 12px; }
button, input, select, textarea { font: inherit; color: inherit; margin: 0; padding: 0; border: 0; background: none; border-radius: 0; }
button { cursor: default; }
button, label, a { white-space: nowrap; }

/* toolbar parts */
.tool { display: flex; align-items: center; gap: 2px; text-align: left; overflow: hidden; }
.gapped { gap: 4px; }
.caret { width: 0; border: 3px solid transparent; border-top: 3px solid var(--ink); border-bottom: 0; margin-left: 2px; flex: none; }
.caret.near { margin-left: 0; }
.sep { width: 1px; height: 20px; background: #cdc7a8; }
.grey svg { filter: grayscale(1); opacity: .6; }
.framed { display: flex; align-items: center; justify-content: center; width: 22px; height: 20px; border: 1px solid #cfcab0; border-right-color: var(--line); border-bottom-color: var(--line); background: #f8f8f6; }
.framed.small { width: 20px; height: 17px; }

/* fields */
.field { display: flex; height: 19px; border: 1px solid var(--line); background: #fff; color: #000; min-width: 0; }
.field.tall { height: 20px; }
.field input, .field select { flex: 1; width: 0; min-width: 0; padding: 0 2px; outline: 0; }
.field select { appearance: none; }
.field:has(select)::after { content: ""; width: 0; border: 4px solid transparent; border-top: 4px solid #000; border-bottom: 0; margin: 7px 3px 0 3px; }
.field button { display: flex; align-items: center; justify-content: center; width: 14px; flex: none; border-left: 1px solid var(--line); background: #f4f4f4; font: bold 11px/12px "Liberation Sans", sans-serif; }
.field .drop::before { content: ""; border: 4px solid transparent; border-top: 4px solid #000; border-bottom: 0; }
.field .num { text-align: right; }
.field .mid { text-align: center; }
.btns { border-left: 0; }
.btns button:first-child { width: 13px; border-left: 0; }
.memobox { display: flex; align-items: flex-start; }
.memobox textarea { flex: 1; min-width: 0; align-self: stretch; border: 1px solid var(--line); background: #fff; resize: none; outline: 0; }

/* header */
.mainbar {
  display: grid;
  grid-template-columns: 34px 157px 237px 28px 146px 24px 5px 54px 8px 21px 8px 22px 22px 24px 5px 21px 6px 23px 6px 21px 7px 22px 22px 7px 22px 1fr 31px;
  align-items: center;
  height: 30px;
  padding-left: 4px;
  border-bottom: 1px solid var(--line);
}
h1 { color: #8b0000; font: bold 17px/20px "Liberation Sans", sans-serif; white-space: nowrap; }
.search { width: 233px; }
.datebar {
  display: grid;
  grid-template-columns: 66px 6px 72px 77px 136px 27px 96px 51px 216px 61px 30px repeat(6, 60px) 1fr;
  align-items: center;
  height: 42px;
  padding-left: 4px;
  border-bottom: 1px solid var(--line);
}
.datebar > .small { margin-top: 12px; }
.mode { display: flex; align-items: center; justify-self: start; gap: 2px; height: 22px; padding: 0; }
.mode.on { border: 1px solid var(--line); background: #e9e3e3; padding: 0 3px; }
.mode:first-child { gap: 3px; width: 63px; }
.datefield { width: 92px; }
.datefield input { color: var(--blue); font-size: 12px; font-weight: bold; padding-left: 4px; }
.callout { display: flex; align-self: start; align-items: center; width: 211px; height: 36px; margin-top: 2px; padding-left: 7px; border: 3px solid #f00; box-shadow: 1px 1px 3px #555; }
.callout a { display: flex; align-items: center; color: var(--blue); text-decoration: none; }
.callout span { text-decoration: underline; }
.day { display: flex; flex-direction: column; align-self: start; align-items: center; width: 50px; gap: 3px; padding-top: 1px; }
.day button { width: 50px; height: 17px; border: 1px solid #cfcab0; border-right-color: var(--line); border-bottom-color: var(--line); background: #fff; color: var(--blue); font-size: 12px; font-weight: bold; }
.today span { color: #1f8a2f; }
.off span { color: #9c9c9c; }

/* main area */
main { display: grid; grid-template-columns: 424px 1fr; flex: 1; background: #fff; border-bottom: 1px solid var(--line); }
.side { padding: 5px 4px 0; min-width: 0; }
fieldset { margin: 0; padding: 3px 5px 1px 4px; border: 1px solid var(--line); min-width: 0; }
legend { margin-left: 3px; padding: 0 3px; }
legend, h2 { color: #b06000; font: bold 12px/12px "Liberation Sans", sans-serif; }
.row { display: grid; grid-template-columns: 75px 1fr; align-items: center; height: 19px; margin-bottom: 4px; }
.row.client { grid-template-columns: 75px 305px 1fr; }
.row.client .framed { justify-self: end; }
.row.auto { grid-template-columns: 75px 190px 38px 1fr; }
.row.auto .field:nth-child(2) { width: 166px; }
.row.service { grid-template-rows: 19px; }
.row.service .field:nth-child(2) { width: 180px; }
.row.service a { color: inherit; line-height: 13px; white-space: normal; }
.row.tight { margin-bottom: 1px; }
.row.memo { height: 34px; align-items: start; }
.row.memo label, .memoline label { white-space: normal; line-height: 13px; }
.row.memo .memobox { height: 34px; }
.info { display: flex; height: 55px; border: 1px solid var(--line); margin-bottom: 3px; }
.info table { flex: 1; border-collapse: collapse; font: 10px/12px "Liberation Sans", sans-serif; color: #000; }
.info th { width: 144px; padding: 0 5px; text-align: left; font-weight: normal; }
.info td { padding: 0 4px; font-weight: bold; }
.info tr:nth-child(odd) { background: #fdf2e0; }
.vscroll { display: flex; flex-direction: column; width: 17px; border-left: 1px solid var(--line); background: #fbfaf4; }
.vscroll button, .hscroll button { background: linear-gradient(90deg, #fbf9ee, #ece6c6); color: #8a8a8a; font: 10px/10px "DejaVu Sans", sans-serif; flex: none; }
.vscroll button { height: 20px; border-bottom: 1px solid var(--line); }
.vscroll button:last-child { border-top: 1px solid var(--line); border-bottom: 0; }
.vscroll span { flex: 1; }
.vscroll .dim, .hscroll .dim { color: #c3c3bb; }
.org { margin-bottom: 2px; }
.org input, .winnum input { color: var(--blue); }
h2 { display: flex; gap: 14px; margin: 6px 0 3px 4px; white-space: nowrap; }
.plan { height: 215px; border: 1px solid var(--line); }
.planbar { display: grid; grid-template-columns: repeat(6, 23px) 6px 93px 6px 96px 23px 1fr; align-items: center; height: 23px; padding-left: 4px; }
.data { width: 100%; border-collapse: collapse; table-layout: fixed; color: #000; }
.data th, .data td { height: 19px; padding: 0 3px; border: 1px solid var(--line); text-align: left; font-weight: normal; white-space: nowrap; overflow: hidden; text-overflow: ellipsis; }
.data th { height: 21px; background: #f4f1dc; color: #5f5526; }
.data .cur { background: #cdc9b3; }
.data .num { text-align: right; }
.plantable th:first-child, .plantable td:first-child { border-left: 0; }
.plantable th:last-child, .plantable td:last-child { border-right: 0; }
.plantable .sel td { background: #5067c1; color: #fff; }
.plantable .alt td { background: #d3d9ef; border-bottom: 0; }
.plantable .last td { border-top: 0; border-bottom: 1px solid var(--line); }
.c-part { width: 31px; } .c-place { width: 94px; } .c-time { width: 64px; } .c-hours { width: 61px; }
.plantable tr:nth-child(2) th:nth-child(2) { padding-left: 8px; }
.row.comment { grid-template-columns: 80px 1fr; margin: 10px 0 5px; }

/* schedule board */
.board { display: grid; position: relative; grid-template-columns: 1fr 17px; grid-template-rows: 1fr 16px; margin: 5px 11px 5px 0; border: 1px solid var(--line); }
.canvas { min-width: 0; overflow: hidden; }
.sched { width: 100%; border-collapse: collapse; table-layout: fixed; font: bold 12px/14px "Liberation Sans", sans-serif; }
.sched th, .sched td { height: 29px; padding: 0; border: 1px solid var(--line); vertical-align: top; text-align: left; overflow: hidden; white-space: nowrap; }
.sched tr > :first-child { border-left: 0; }
.sched thead tr:first-child th { border-top: 0; }
.s-mark { width: 28px; } .s-shop { width: 311px; } .s-gap { width: 26px; } .s-q { width: 23px; } .s-q4 { width: 22px; }
#hours th { height: 20px; padding: 3px 3px 0; }
#quarters th { height: 15px; padding: 0 0 0 3px; font-size: 10px; }
#hours .shop { text-align: center; padding-left: 54px; }
.sched .gap { background: #d0d0d0; }
.sched .green { background: #80ff00; padding: 1px 4px; }
.sched .slot { border-left: 1px dotted var(--line); border-right: 0; }
.sched .odd { background: #f9f6ec; }
.sched .noon, .sched .noon.odd { background: #ffffb4; }
.sched .ev { padding: 0 2px; background: #d3d9ef; color: #000; font: 11px/14px "Liberation Sans", sans-serif; white-space: pre-line; }
.sched .ev.now { background: #5067c1; color: #fff; }
.legend { display: flex; flex-direction: column; width: 40px; margin: 25px 0 0 708px; border: 1px solid var(--line); }
.legend i { height: 20px; border-bottom: 1px solid var(--line); }
.l1 { background: #ffb6c1; } .l2 { background: #dda0dd; } .l3 { background: #fa8072; } .l4 { background: #fdeb8a; }
.l5 { background: #9bdb47; } .l6 { background: #0ff; } .l7 { background: #00bfff; } .l8 { background: #f00; }
.tallscroll button { height: 21px; }
.tallscroll b { flex: 20; background: linear-gradient(90deg, #fbf9ee, #ece6c6); border-bottom: 1px solid var(--line); }
.tallscroll span { flex: 5; }
.hscroll { display: flex; height: 15px; border-top: 1px solid var(--line); background: #fbfaf4; }
.hscroll button { width: 20px; border-right: 1px solid var(--line); }
.hscroll button:last-child { border-left: 1px solid var(--line); border-right: 0; }
.hscroll b { flex: 8; border-right: 1px solid var(--line); background: radial-gradient(circle at center, #c9c3a0 2px, transparent 3px), linear-gradient(#fbf9ee, #ece6c6); }
.hscroll span { flex: 4; }
.hscroll.wide b { flex: 8; }
.hscroll.wide span { flex: 1; }
.corner { border: solid var(--line); border-width: 1px 0 0 1px; }
.collapse { position: absolute; left: 4px; top: 335px; width: 10px; height: 11px; border: 1px solid var(--line); background: #fff; font: 10px/8px "Liberation Sans", sans-serif; }

/* footer */
footer { display: flex; align-items: center; height: 51px; padding: 0 5px 0 8px; }
.big { display: flex; align-items: center; justify-content: center; width: 57px; height: 43px; border: 1px solid #cfcab0; border-right-color: var(--line); border-bottom-color: var(--line); background: #f6f6f4; color: #2b569c; flex: none; }
.word { justify-content: flex-start; gap: 4px; padding-left: 2px; font: bold 12px/16px "Liberation Sans", sans-serif; }
.word.clients { width: 140px; margin-left: auto; }
.word.basket { width: 100px; margin-left: 1px; gap: 10px; }
.word.checkin { width: 124px; margin: 0 4px; gap: 2px; padding-left: 0; }
.save { width: 64px; height: 48px; outline: 1px dotted #000; outline-offset: -7px; border: 3px solid #f00; margin: 0 1px 0 -2px; }

/* plan window */
.window { position: absolute; left: 438px; top: 152px; width: 730px; padding: 0 3px 2px 3px; border: 1px solid #8b8b8b; background: #cbcbcb; box-shadow: 1px 1px 2px #777; }
.titlebar { display: flex; align-items: center; height: 22px; gap: 6px; padding-right: 2px; }
.titlebar h3 { flex: 1; color: #333; font: bold 12px/16px "Liberation Sans", sans-serif; }
.titlebar button { display: flex; padding: 0 2px; }
.winbody { border: 1px solid #777; background: #fff; }
.winbar {
  display: grid;
  grid-template-columns: 82px 8px 99px 6px 65px 7px 21px 8px 23px 21px 5px 24px 21px 8px 27px 7px 57px 7px 22px 6px 80px 5px 22px 8px 20px 7px 21px 12px 1fr;
  align-items: center;
  height: 25px;
  padding-left: 4px;
  border-bottom: 1px solid var(--line);
  background: var(--bar);
}
.more { display: flex; flex-direction: column; align-items: center; justify-self: center; gap: 5px; font: bold 14px/8px "Liberation Sans", sans-serif; }
.more .caret { margin-left: 0; }
.winnum { display: grid; grid-template-columns: 87px 96px 20px 116px 1fr; align-items: center; height: 26px; padding: 0 4px 0 5px; border-bottom: 1px solid var(--line); background: var(--bar); }
.winnum label { color: var(--blue); font: bold 12px/14px "Liberation Sans", sans-serif; }
.w50 { width: 50px; } .w60 { width: 60px; } .w82 { width: 82px; } .w84 { width: 84px; } .w88 { width: 88px; } .w104 { width: 104px; }
.w128 { width: 128px; } .w151 { width: 151px; } .w220 { width: 220px; }
.caretfield input { border-left: 1px solid #000; padding-left: 0; margin: 2px 0 2px 2px; }
.field .spin { flex-direction: column; gap: 5px; background: #fff; }
.su, .sd { border: 3px solid transparent; }
.su { border-top: 0; border-bottom: 3px solid var(--blue); }
.sd { border-bottom: 0; border-top: 3px solid var(--blue); }
.form { display: grid; grid-template-columns: 319px 1fr; padding: 9px 4px 0 5px; }
.col { display: flex; flex-direction: column; gap: 5px; min-width: 0; }
.line { display: flex; align-items: center; height: 19px; }
.line > label:first-child { width: 87px; flex: none; }
.right .line > label:first-child { width: 80px; }
.line .field { flex: none; }
.line .grow { flex: 1; }
.line.memoline { height: 67px; align-items: flex-start; }
.memoline .memobox { width: 220px; height: 67px; }
.line .t { margin: 0 6px 0 4px; width: 34px; }
.line .w50 { margin-left: auto; margin-right: 105px; }
.sms { display: flex; align-items: center; gap: 2px; margin-left: 8px; color: #b9ab80; }
.sms input { appearance: none; width: 13px; height: 13px; border: 1px solid #d6d0b4; border-radius: 2px; }
.third { width: 71px; margin-left: 5px; flex: none; overflow: visible; }
.bulb { margin: 0 5px 0 4px; }
.swirl { width: 21px; height: 21px; }
.vin { margin-bottom: 24px; }
.carlink { margin-left: 5px; color: var(--blue); }
.total { height: 29px; padding: 8px 4px 0; color: var(--blue); font: bold 12px/15px "Liberation Sans", sans-serif; text-align: right; }
.tabs { display: grid; grid-template-columns: 97px 98px 100px 107px 108px 110px 44px; gap: 6px; padding-left: 4px; height: 18px; }
.tabs button { border: 1px solid #cfc9a8; border-bottom: 0; border-radius: 5px 5px 0 0; background: #ece7cd; color: #5f5526; }
.tabs .on { z-index: 1; margin-bottom: -1px; background: #fff; border-top: 2px solid #f0c46c; color: var(--ink); }
.pane { display: grid; grid-template-columns: 488px 210px; gap: 4px; margin: 0 4px; padding: 1px 4px 5px; border: 1px solid var(--line); }
.worksbar { display: grid; grid-template-columns: 23px 23px 23px 23px 23px 22px 23px 24px 22px 6px 93px 6px 69px 6px 1fr; align-items: center; height: 23px; padding-left: 4px; }
.peoplebar { display: grid; grid-template-columns: 23px 22px 23px 22px 7px 1fr; align-items: center; height: 23px; padding-left: 21px; }
.box { border: 1px solid var(--line); }
.box th:first-child, .box td:first-child { border-left: 0; }
.box th:last-child, .box td:last-child { border-right: 0; }
.box th { border-top: 0; }
.box .data .cut { text-overflow: clip; }
.box .data tfoot td { height: 21px; background: var(--bar); color: var(--blue); border-bottom: 0; }
.box .data .mark { background: #5067c1; color: #fff; }
.box .data .blank td { height: 67px; }
.box .data .tallblank td { height: 105px; }
.w20 { width: 20px; } .w158 { width: 158px; } .w53 { width: 53px; } .w36 { width: 36px; } .w32 { width: 32px; } .w75 { width: 75px; } .w103 { width: 103px; } .w44 { width: 44px; }
.winfoot { display: grid; grid-template-columns: 87px 67px 142px 7px 92px 8px 79px 8px 71px 7px 73px 8px 1fr; align-items: center; height: 26px; margin-top: 2px; padding-left: 5px; border-top: 1px solid var(--line); background: var(--bar); }
.spread .caret { margin-left: auto; margin-right: 6px; }
.ok { gap: 18px; font-size: 12px; }

.pointer { position: absolute; left: 605px; top: 65px; width: 30px; height: 92px; filter: drop-shadow(2px 1px 1px #888); }
```

FILE: app.js
```js
const make = (tag, cls, text) => {
  const el = document.createElement(tag);
  if (cls) el.className = cls;
  if (text) el.textContent = text;
  return el;
};
const cols = document.getElementById('schedCols');
const hours = document.getElementById('hours');
const quarters = document.getElementById('quarters');
const slots = document.getElementById('slots');
const marks = ['00', '15', '30', '45'];
const grid = [];

['09', '10', '11', '12', '13', '14'].forEach(h => {
  const n = h === '14' ? 1 : 4;
  const th = make('th', h === '13' ? 'noon' : '', h);
  th.colSpan = n;
  hours.append(th);
  marks.slice(0, n).forEach((m, i) => {
    const cls = h === '13' ? 'noon' : '';
    cols.append(make('col', n === 1 ? '' : i === 3 ? 's-q4' : 's-q'));
    quarters.append(make('th', cls, m));
    grid.push('slot ' + cls + (i % 2 ? '' : ' odd'));
  });
});

const shops = ['№01\u00a0 2-х стоечный подъемник', '№04\u00a0 без подъемника'];
for (let r = 0; r < 11; r++) {
  const tr = make('tr');
  tr.append(make('td'), make('td', shops[r] ? 'green' : '', shops[r]), make('td', 'gap'));
  let from = 0;
  if (r === 0) {
    const a = make('td', 'ev now', 'Масло\nДВС с');
    a.colSpan = 2;
    const b = make('td', 'ev', 'Углы установки колес (2 оси)\n- проверка и регулировка');
    b.colSpan = 7;
    tr.append(a, b);
    from = 9;
  }
  grid.slice(from).forEach(c => tr.append(make('td', c)));
  slots.append(tr);
}
```
